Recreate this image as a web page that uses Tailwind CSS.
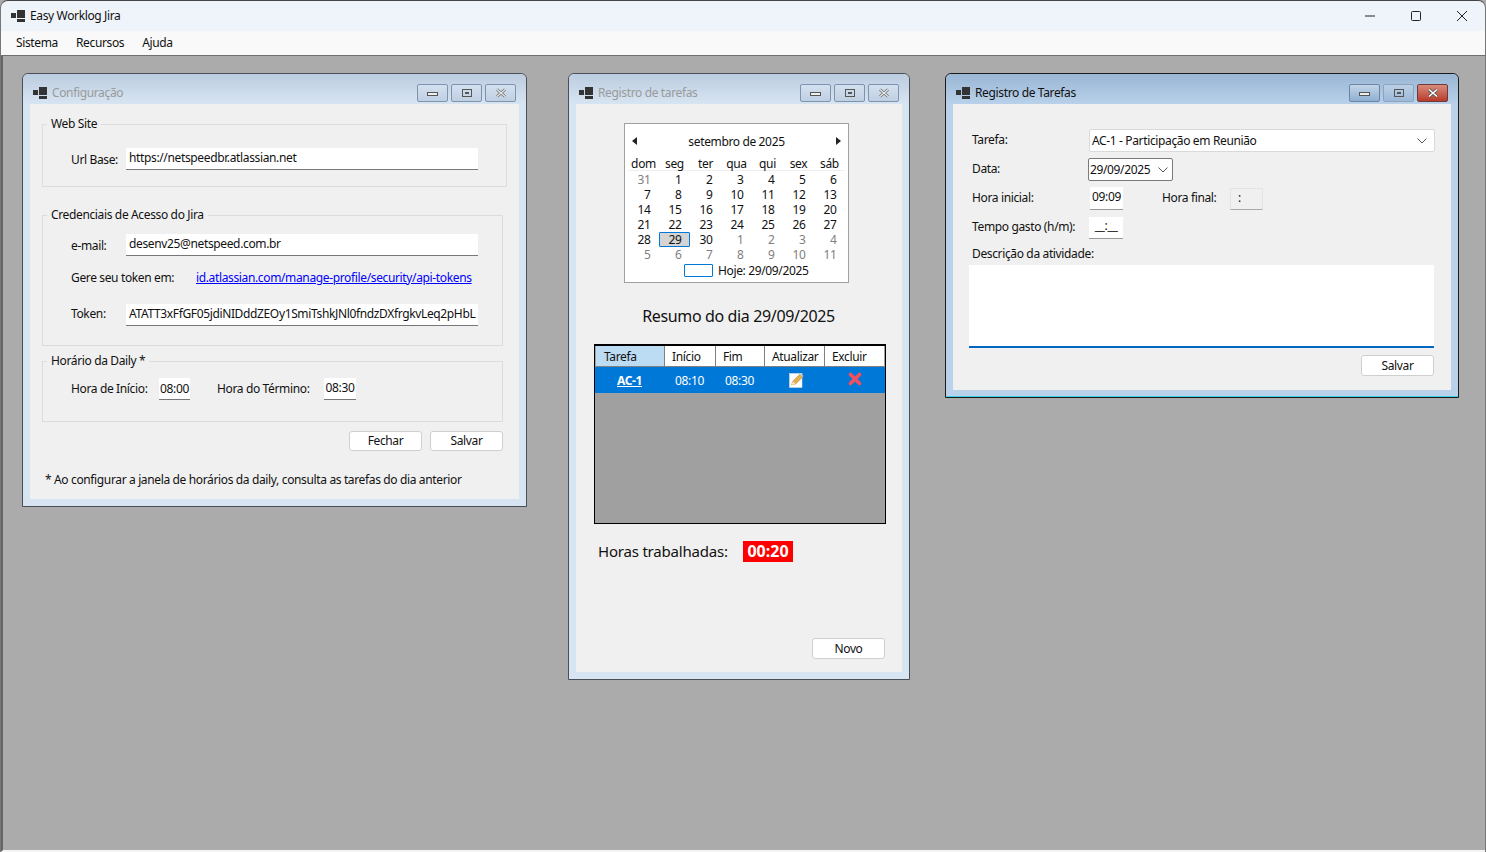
<!DOCTYPE html>
<html lang="pt-BR">
<head>
<meta charset="UTF-8">
<title>Easy Worklog Jira</title>
<script src="https://cdn.jsdelivr.net/npm/@tailwindcss/browser@4"></script>
</head>
<body class="w-[1486px] h-[852px] overflow-hidden bg-[#ababab] font-['Noto_Sans',sans-serif] text-[12px] leading-[16px] tracking-[-0.36px] text-[#111]">
<div class="w-[1486px] h-[852px] flex flex-col rounded-t-[8px] overflow-hidden border-t border-x border-t-[#444] border-x-[#777]">

  <!-- barra de titulo -->
  <div class="h-[30px] shrink-0 bg-[#eff4fb] flex items-center">
    <svg class="ml-[10px] w-[14px] h-[12px]" viewBox="0 0 14 12"><rect x="6" y="0" width="8" height="8" fill="#333"/><rect x="0" y="3" width="5" height="5" fill="#333"/><rect x="6" y="9" width="8" height="3" fill="#333"/></svg>
    <span class="ml-[5px]">Easy Worklog Jira</span>
    <div class="ml-auto flex">
      <div class="w-[46px] h-[30px] flex items-center justify-center"><svg class="w-[12px] h-[12px]" viewBox="0 0 12 12"><path d="M1 6h10" stroke="#222" stroke-width="1"/></svg></div>
      <div class="w-[46px] h-[30px] flex items-center justify-center"><svg class="w-[12px] h-[12px]" viewBox="0 0 12 12"><rect x="1.5" y="1.5" width="9" height="9" rx="1" fill="none" stroke="#222"/></svg></div>
      <div class="w-[46px] h-[30px] flex items-center justify-center"><svg class="w-[12px] h-[12px]" viewBox="0 0 12 12"><path d="M1 1l10 10M11 1L1 11" stroke="#222" stroke-width="1"/></svg></div>
    </div>
  </div>

  <!-- menu -->
  <div class="h-[25px] shrink-0 bg-[#f9f9f9] border-b border-[#6f6f6f] flex items-center pl-[15px] gap-[18px]">
    <span>Sistema</span><span>Recursos</span><span>Ajuda</span>
  </div>

  <!-- area MDI -->
  <div class="relative grow bg-[#ababab] border-l-2 border-[#666] border-b-2 border-b-[#f4f4f4]">

    <!-- Configuração -->
    <div class="absolute left-[19px] top-[17px] w-[505px] h-[434px] rounded-t-[6px] border border-[#4a4f55] bg-[#d7e4f2] flex flex-col">
      <div class="h-[30px] shrink-0 rounded-t-[6px] bg-gradient-to-b from-[#bccde0] to-[#d7e4f2] flex items-center pl-[10px] pr-[9px] pt-[7px]">
        <svg class="w-[14px] h-[12px]" viewBox="0 0 14 12"><rect x="6" y="0" width="8" height="8" fill="#333"/><rect x="0" y="3" width="5" height="5" fill="#333"/><rect x="6" y="9" width="8" height="3" fill="#333"/></svg>
        <span class="ml-[5px] text-[#9a9a9a]">Configuração</span>
        <div class="ml-auto flex gap-[3px] mr-[1px]">
          <div class="w-[31px] h-[18px] rounded-[2px] border border-[#8093ad] bg-gradient-to-b from-[#d3e0ef] to-[#bfd0e3] flex items-center justify-center"><div class="w-[11px] h-[4px] border border-[#555] bg-[#eee] mt-[2px]"></div></div>
          <div class="w-[31px] h-[18px] rounded-[2px] border border-[#8093ad] bg-gradient-to-b from-[#d3e0ef] to-[#bfd0e3] flex items-center justify-center"><div class="w-[10px] h-[8px] border border-[#555] flex items-center justify-center"><div class="w-[4px] h-[2px] bg-[#555]"></div></div></div>
          <div class="w-[31px] h-[18px] rounded-[2px] border border-[#8093ad] bg-gradient-to-b from-[#d3e0ef] to-[#bfd0e3] flex items-center justify-center"><svg class="w-[12px] h-[10px]" viewBox="0 0 12 10"><path d="M2 1.5l8 7M10 1.5l-8 7" stroke="#666" stroke-width="2.6"/><path d="M2 1.5l8 7M10 1.5l-8 7" stroke="#eee" stroke-width="1.2"/></svg></div>
        </div>
      </div>
      <div class="mx-[7px] h-[395px] bg-[#f0f0f0] pl-[12px] pt-[20px]">
        <div class="relative w-[465px] h-[63px] border border-[#dcdcdc] pt-[23px] pl-[28px]">
          <span class="absolute -top-[9px] left-[4px] px-[4px] bg-[#f0f0f0]">Web Site</span>
          <div class="flex items-center">
            <span class="w-[55px] pt-[2px]">Url Base:</span>
            <div class="w-[352px] h-[22px] bg-white border-b border-[#777] pl-[3px] pt-[2px]">https://netspeedbr.atlassian.net</div>
          </div>
        </div>
        <div class="relative mt-[28px] w-[461px] h-[131px] border border-[#dcdcdc] pt-[18px] pl-[28px]">
          <span class="absolute -top-[9px] left-[4px] px-[4px] bg-[#f0f0f0]">Credenciais de Acesso do Jira</span>
          <div class="flex items-center">
            <span class="w-[55px] pt-[2px]">e-mail:</span>
            <div class="w-[352px] h-[22px] bg-white border-b border-[#777] pl-[3px] pt-[2px]">desenv25@netspeed.com.br</div>
          </div>
          <div class="flex mt-[14px]">
            <span class="w-[125px]">Gere seu token em:</span>
            <span class="text-[#0000ff] underline">id.atlassian.com/manage-profile/security/api-tokens</span>
          </div>
          <div class="flex items-center mt-[18px]">
            <span class="w-[55px] -mt-[2px]">Token:</span>
            <div class="w-[352px] h-[22px] bg-white border-b border-[#777] pl-[3px] pt-[2px] overflow-hidden whitespace-nowrap">ATATT3xFfGF05jdiNIDddZEOy1SmiTshkJNl0fndzDXfrgkvLeq2pHbL</div>
          </div>
        </div>
        <div class="relative mt-[15px] w-[461px] h-[61px] border border-[#dcdcdc] pt-[16px] pl-[28px]">
          <span class="absolute -top-[9px] left-[4px] px-[4px] bg-[#f0f0f0]">Horário da Daily *</span>
          <div class="flex items-center">
            <span class="w-[88px]">Hora de Início:</span>
            <div class="w-[31px] h-[22px] bg-white border-b border-[#777] text-center pt-[3px]">08:00</div>
            <span class="ml-[27px] w-[107px]">Hora do Término:</span>
            <div class="w-[32px] h-[22px] -mt-[1px] bg-white border-b border-[#777] text-center pt-[2px]">08:30</div>
          </div>
        </div>
        <div class="w-[461px] mt-[9px] flex justify-end gap-[8px]">
          <div class="w-[73px] h-[20px] rounded-[3px] bg-white border border-[#cfcfcf] text-center pt-[1px]">Fechar</div>
          <div class="w-[73px] h-[20px] rounded-[3px] bg-white border border-[#cfcfcf] text-center pt-[1px]">Salvar</div>
        </div>
        <p class="mt-[21px] ml-[3px]">* Ao configurar a janela de horários da daily, consulta as tarefas do dia anterior</p>
      </div>
    </div>

    <!-- Registro de tarefas (calendario) -->
    <div class="absolute left-[565px] top-[17px] w-[342px] h-[607px] rounded-t-[6px] border border-[#4a4f55] bg-[#d7e4f2] flex flex-col">
      <div class="h-[30px] shrink-0 rounded-t-[6px] bg-gradient-to-b from-[#bccde0] to-[#d7e4f2] flex items-center pl-[10px] pr-[9px] pt-[7px]">
        <svg class="w-[14px] h-[12px]" viewBox="0 0 14 12"><rect x="6" y="0" width="8" height="8" fill="#333"/><rect x="0" y="3" width="5" height="5" fill="#333"/><rect x="6" y="9" width="8" height="3" fill="#333"/></svg>
        <span class="ml-[5px] text-[#9a9a9a]">Registro de tarefas</span>
        <div class="ml-auto flex gap-[3px] mr-[1px]">
          <div class="w-[31px] h-[18px] rounded-[2px] border border-[#8093ad] bg-gradient-to-b from-[#d3e0ef] to-[#bfd0e3] flex items-center justify-center"><div class="w-[11px] h-[4px] border border-[#555] bg-[#eee] mt-[2px]"></div></div>
          <div class="w-[31px] h-[18px] rounded-[2px] border border-[#8093ad] bg-gradient-to-b from-[#d3e0ef] to-[#bfd0e3] flex items-center justify-center"><div class="w-[10px] h-[8px] border border-[#555] flex items-center justify-center"><div class="w-[4px] h-[2px] bg-[#555]"></div></div></div>
          <div class="w-[31px] h-[18px] rounded-[2px] border border-[#8093ad] bg-gradient-to-b from-[#d3e0ef] to-[#bfd0e3] flex items-center justify-center"><svg class="w-[12px] h-[10px]" viewBox="0 0 12 10"><path d="M2 1.5l8 7M10 1.5l-8 7" stroke="#666" stroke-width="2.6"/><path d="M2 1.5l8 7M10 1.5l-8 7" stroke="#eee" stroke-width="1.2"/></svg></div>
        </div>
      </div>
      <div class="mx-[7px] h-[568px] bg-[#f0f0f0] pt-[19px] flex flex-col">
        <div class="ml-[48px] w-[225px] h-[160px] bg-white border border-[#a0a0a0] pl-[3px]">
          <div class="flex items-center h-[33px] pt-[3px] pr-[7px]">
            <svg class="ml-[4px] w-[5px] h-[8px] -mt-[3px]" viewBox="0 0 5 8"><path d="M5 0v8L0 4z" fill="#222"/></svg>
            <span class="grow text-center">setembro de 2025</span>
            <svg class="w-[5px] h-[8px] -mt-[3px]" viewBox="0 0 5 8"><path d="M0 0v8l5-4z" fill="#222"/></svg>
          </div>
          <div class="grid grid-cols-[repeat(7,31px)] h-[14px] w-[217px] border-b border-[#eeeeee] text-center leading-[13px]">
            <span>dom</span><span>seg</span><span>ter</span><span>qua</span><span>qui</span><span>sex</span><span>sáb</span>
          </div>
          <div class="grid grid-cols-[repeat(7,31px)] auto-rows-[15px] mt-[1px] text-right leading-[15px]">
            <span class="pr-[8.5px] text-[#808080]">31</span><span class="pr-[8.5px]">1</span><span class="pr-[8.5px]">2</span><span class="pr-[8.5px]">3</span><span class="pr-[8.5px]">4</span><span class="pr-[8.5px]">5</span><span class="pr-[8.5px]">6</span>
            <span class="pr-[8.5px]">7</span><span class="pr-[8.5px]">8</span><span class="pr-[8.5px]">9</span><span class="pr-[8.5px]">10</span><span class="pr-[8.5px]">11</span><span class="pr-[8.5px]">12</span><span class="pr-[8.5px]">13</span>
            <span class="pr-[8.5px]">14</span><span class="pr-[8.5px]">15</span><span class="pr-[8.5px]">16</span><span class="pr-[8.5px]">17</span><span class="pr-[8.5px]">18</span><span class="pr-[8.5px]">19</span><span class="pr-[8.5px]">20</span>
            <span class="pr-[8.5px]">21</span><span class="pr-[8.5px]">22</span><span class="pr-[8.5px]">23</span><span class="pr-[8.5px]">24</span><span class="pr-[8.5px]">25</span><span class="pr-[8.5px]">26</span><span class="pr-[8.5px]">27</span>
            <span class="pr-[8.5px]">28</span><span class="pr-[7.5px] bg-[#d4d4d4] border border-[#0078d7] rounded-[1px] leading-[13px]">29</span><span class="pr-[8.5px]">30</span><span class="pr-[8.5px] text-[#808080]">1</span><span class="pr-[8.5px] text-[#808080]">2</span><span class="pr-[8.5px] text-[#808080]">3</span><span class="pr-[8.5px] text-[#808080]">4</span>
            <span class="pr-[8.5px] text-[#808080]">5</span><span class="pr-[8.5px] text-[#808080]">6</span><span class="pr-[8.5px] text-[#808080]">7</span><span class="pr-[8.5px] text-[#808080]">8</span><span class="pr-[8.5px] text-[#808080]">9</span><span class="pr-[8.5px] text-[#808080]">10</span><span class="pr-[8.5px] text-[#808080]">11</span>
          </div>
          <div class="flex items-center ml-[56px] h-[16px]">
            <div class="w-[29px] h-[13px] border border-[#0078d7] rounded-[1px]"></div>
            <span class="ml-[5px] pt-[2px]">Hoje: 29/09/2025</span>
          </div>
        </div>
        <p class="mt-[23px] text-center text-[16px] leading-[20px] -ml-[1px]">Resumo do dia 29/09/2025</p>
        <div class="ml-[18px] mt-[18px] w-[292px] h-[180px] border border-t-2 border-black bg-[#a0a0a0]">
          <div class="flex h-[21px] mx-px bg-white">
            <div class="w-[69px] bg-[#bcdcf4] border-r border-[#808080] border-b pl-[8px] pt-[3px]">Tarefa</div>
            <div class="w-[51px] border-r border-b border-[#808080] pl-[7px] pt-[3px]">Início</div>
            <div class="w-[49px] border-r border-b border-[#808080] pl-[7px] pt-[3px]">Fim</div>
            <div class="w-[60px] border-r border-b border-[#808080] pl-[7px] pt-[3px]">Atualizar</div>
            <div class="w-[59px] border-b border-[#808080] pl-[7px] pt-[3px]">Excluir</div>
          </div>
          <div class="flex h-[26px] bg-[#0078d7] text-white items-center">
            <div class="w-[69px] pt-[1px] text-center font-bold underline">AC-1</div>
            <div class="w-[51px] pt-[1px] text-center">08:10</div>
            <div class="w-[49px] pt-[1px] text-center">08:30</div>
            <div class="w-[60px] pl-[3px] flex justify-center">
              <svg class="w-[16px] h-[16px] -mt-[1px]" viewBox="0 0 16 16"><rect x="1.5" y="1.5" width="12.5" height="14" fill="#fff" stroke="#d5dde6" stroke-width="0.6"/><path d="M3.5 13l1.2-3.6L11.5 2.5l3 2.6-6.8 6.8z" fill="#e9ae4c" stroke="#b98a3a" stroke-width="0.6"/><path d="M3.5 13l4.2-1.1-3-2.5z" fill="#f7e6c4"/><path d="M11.5 2.5l3 2.6 1-1.1-3-2.6z" fill="#c9c4b8"/></svg>
            </div>
            <div class="w-[60px] pl-[1px] flex justify-center">
              <svg class="w-[14px] h-[14px] -mt-[2px]" viewBox="0 0 14 14"><path d="M2.5 2.5l9 9M11.5 2.5l-9 9" stroke="#f2505c" stroke-width="3.6" stroke-linecap="round"/></svg>
            </div>
          </div>
        </div>
        <div class="flex items-center mt-[17px] ml-[22px]">
          <span class="text-[15px] tracking-[-0.2px] leading-[21px] w-[145px]">Horas trabalhadas:</span>
          <span class="w-[50px] h-[21px] bg-[#ff0000] text-white font-bold text-[16px] tracking-normal leading-[21px] text-center">00:20</span>
        </div>
        <div class="mt-auto mb-[13px] mr-[17px] flex justify-end">
          <div class="w-[73px] h-[21px] rounded-[3px] bg-white border border-[#cfcfcf] text-center pt-[2px]">Novo</div>
        </div>
      </div>
    </div>

    <!-- Registro de Tarefas (ativa) -->
    <div class="absolute left-[942px] top-[17px] w-[514px] h-[325px] rounded-t-[6px] border border-[#1a1a1a] bg-[#b9d1ea] flex flex-col shadow-[inset_0_-1px_0_#3ad0e6]">
      <div class="h-[30px] shrink-0 rounded-t-[6px] bg-gradient-to-b from-[#9ab6d4] to-[#b9d1ea] flex items-center pl-[10px] pr-[9px] pt-[7px]">
        <svg class="w-[14px] h-[12px]" viewBox="0 0 14 12"><rect x="6" y="0" width="8" height="8" fill="#333"/><rect x="0" y="3" width="5" height="5" fill="#333"/><rect x="6" y="9" width="8" height="3" fill="#333"/></svg>
        <span class="ml-[5px]">Registro de Tarefas</span>
        <div class="ml-auto flex gap-[3px] mr-[1px]">
          <div class="w-[31px] h-[18px] rounded-[2px] border border-[#6d84a3] bg-gradient-to-b from-[#c3d5e8] to-[#8fb0d2] flex items-center justify-center"><div class="w-[11px] h-[4px] border border-[#555] bg-[#eee] mt-[2px]"></div></div>
          <div class="w-[31px] h-[18px] rounded-[2px] border border-[#8aa4c2] bg-gradient-to-b from-[#bcd0e5] to-[#9bb9d8] flex items-center justify-center"><div class="w-[10px] h-[8px] border border-[#555] flex items-center justify-center"><div class="w-[4px] h-[2px] bg-[#555]"></div></div></div>
          <div class="w-[31px] h-[18px] rounded-[2px] border border-[#6e3a3a] bg-gradient-to-b from-[#d98a7c] to-[#b8392a] flex items-center justify-center"><svg class="w-[12px] h-[10px]" viewBox="0 0 12 10"><path d="M2 1.5l8 7M10 1.5l-8 7" stroke="#555" stroke-width="3"/><path d="M2 1.5l8 7M10 1.5l-8 7" stroke="#fff" stroke-width="1.6"/></svg></div>
        </div>
      </div>
      <div class="mx-[7px] h-[286px] bg-[#f0f0f0] pl-[19px] pt-[25px]">
        <div class="flex">
          <span class="w-[117px] pt-[3px]">Tarefa:</span>
          <div class="w-[346px] h-[23px] bg-white border border-[#d9d9d9] rounded-[2px] flex items-center pl-[2px] pr-[7px]">
            <span class="grow">AC-1 - Participação em Reunião</span>
            <svg class="w-[10px] h-[6px]" viewBox="0 0 10 6"><path d="M0.5 0.5L5 5l4.5-4.5" fill="none" stroke="#555"/></svg>
          </div>
        </div>
        <div class="flex mt-[6px]">
          <span class="w-[116px] pt-[3px]">Data:</span>
          <div class="w-[85px] h-[23px] bg-white border border-[#7a7a7a] rounded-[2px] flex items-center pl-[1px] pr-[4px]">
            <span class="grow">29/09/2025</span>
            <svg class="w-[10px] h-[6px]" viewBox="0 0 10 6"><path d="M0.5 0.5L5 5l4.5-4.5" fill="none" stroke="#555"/></svg>
          </div>
        </div>
        <div class="flex mt-[6px]">
          <span class="w-[118px] pt-[3px]">Hora inicial:</span>
          <div class="w-[33px] h-[23px] bg-white border-b border-[#999] text-center pt-[2px]">09:09</div>
          <span class="ml-[39px] w-[68px] pt-[3px]">Hora final:</span>
          <div class="w-[33px] h-[22px] mt-[1px] bg-[#f0f0f0] border border-[#e3e3e3] border-b-[#aaa] pl-[7px] pt-[1px]">:</div>
        </div>
        <div class="flex mt-[7px]">
          <span class="w-[117px] pt-[2px]">Tempo gasto (h/m):</span>
          <div class="w-[34px] h-[22px] bg-white border-b border-[#999] text-center pt-[1px]">__:__</div>
        </div>
        <p class="mt-[7px]">Descrição da atividade:</p>
        <div class="-ml-[3px] mt-[3px] w-[465px] h-[83px] bg-white border-b-2 border-[#0067c0]"></div>
        <div class="w-[462px] mt-[7px] flex justify-end">
          <div class="w-[73px] h-[21px] rounded-[3px] bg-white border border-[#cfcfcf] text-center pt-[2px]">Salvar</div>
        </div>
      </div>
    </div>

  </div>
</div>
</body>
</html>
